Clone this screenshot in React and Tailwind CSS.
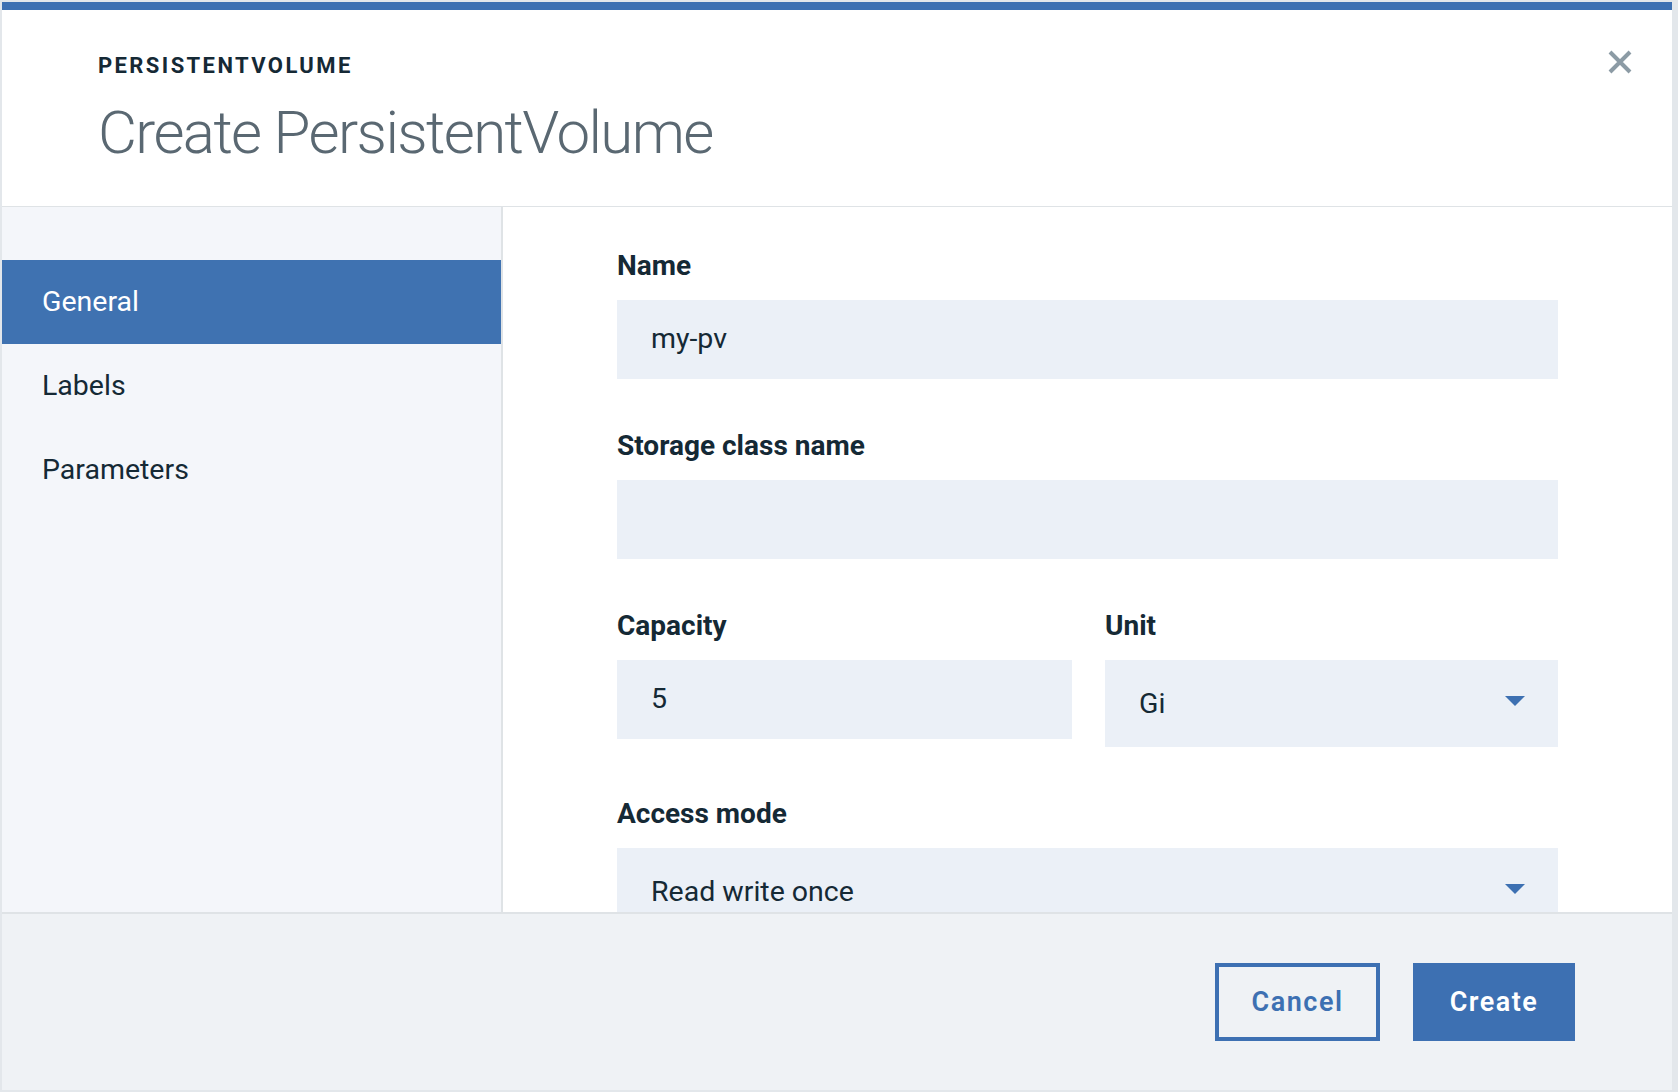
import { useState } from 'react'

const fieldBox = 'bg-[#ebf0f7] h-[79px] flex items-center pl-[34px] pr-[33px] text-[28.5px] text-[#152935]'
const labelCls = 'h-[36px] leading-[36px] text-[28px] font-bold text-[#152935] mb-[16px]'

function Caret() {
  return (
    <svg width="20" height="10" viewBox="0 0 20 10" className="ml-auto mb-[6px]">
      <path d="M0 0 L20 0 L10 10 Z" fill="#3d70b2" />
    </svg>
  )
}

export default function App() {
  const [active, setActive] = useState('General')
  const tabs = ['General', 'Labels', 'Parameters']

  return (
    <div className="w-[1678px] h-[1092px] bg-[#e3e7eb] pt-[2px] pl-[2px] overflow-hidden" style={{ fontFamily: 'Roboto, "Liberation Sans", sans-serif' }}>
      <div className="w-[1670px] h-[1088px] bg-white border-t-[8px] border-[#3d70b2] flex flex-col">
        {/* header */}
        <div className="h-[197px] shrink-0 border-b border-[#dfe3e6] flex pt-[40px] pl-[96px] pr-[40px]">
          <div className="flex-1 pt-[5px]">
            <div className="text-[22px] leading-[22px] font-bold tracking-[2.4px] text-[#152935]">PERSISTENTVOLUME</div>
            <h1 className="mt-[24px] text-[60px] leading-[64px] font-light tracking-[-1.6px] text-[#5a6872]">Create PersistentVolume</h1>
          </div>
          <button className="w-[24px] h-[24px]">
            <svg width="24" height="24" viewBox="0 0 24 24">
              <path d="M2 2 L22 22 M22 2 L2 22" stroke="#8c9ba5" strokeWidth="4" />
            </svg>
          </button>
        </div>

        {/* body */}
        <div className="h-[705px] shrink-0 flex">
          <div className="w-[501px] shrink-0 bg-[#f4f6fa] border-r-2 border-[#dfe3e6] pt-[53px]">
            {tabs.map(t => (
              <div
                key={t}
                onClick={() => setActive(t)}
                className={'h-[84px] flex items-center pl-[40px] text-[28.5px] cursor-pointer ' + (active === t ? 'bg-[#3f72b1] text-white' : 'text-[#152935]')}
              >
                {t}
              </div>
            ))}
          </div>

          <div className="flex-1 overflow-hidden pl-[114px] pt-[41px]">
            <div className="w-[941px]">
              <div className={labelCls}>Name</div>
              <div className={fieldBox}>my-pv</div>

              <div className={labelCls + ' mt-[49px]'}>Storage class name</div>
              <div className={fieldBox}></div>

              <div className="flex gap-[33px] mt-[49px]">
                <div className="w-[455px]">
                  <div className={labelCls}>Capacity</div>
                  <div className={fieldBox}>5</div>
                </div>
                <div className="flex-1">
                  <div className={labelCls}>Unit</div>
                  <div className={fieldBox + ' h-[87px]'}>
                    <span className="pt-[2px]">Gi</span>
                    <Caret />
                  </div>
                </div>
              </div>

              <div className={labelCls + ' mt-[49px]'}>Access mode</div>
              <div className={fieldBox + ' h-[87px]'}>
                <span className="pt-[2px]">Read write once</span>
                <Caret />
              </div>
            </div>
          </div>
        </div>

        {/* footer */}
        <div className="flex-1 bg-[#eff2f5] border-t-2 border-[#dfe3e6] flex items-center justify-end gap-[33px] pr-[97px]">
          <button className="w-[165px] h-[78px] border-[4px] border-[#3d70b2] text-[#3d70b2] text-[27px] font-semibold tracking-[1.5px]">Cancel</button>
          <button className="w-[162px] h-[78px] bg-[#3d70b2] text-white text-[27px] font-semibold tracking-[1.5px]">Create</button>
        </div>
      </div>
    </div>
  )
}
